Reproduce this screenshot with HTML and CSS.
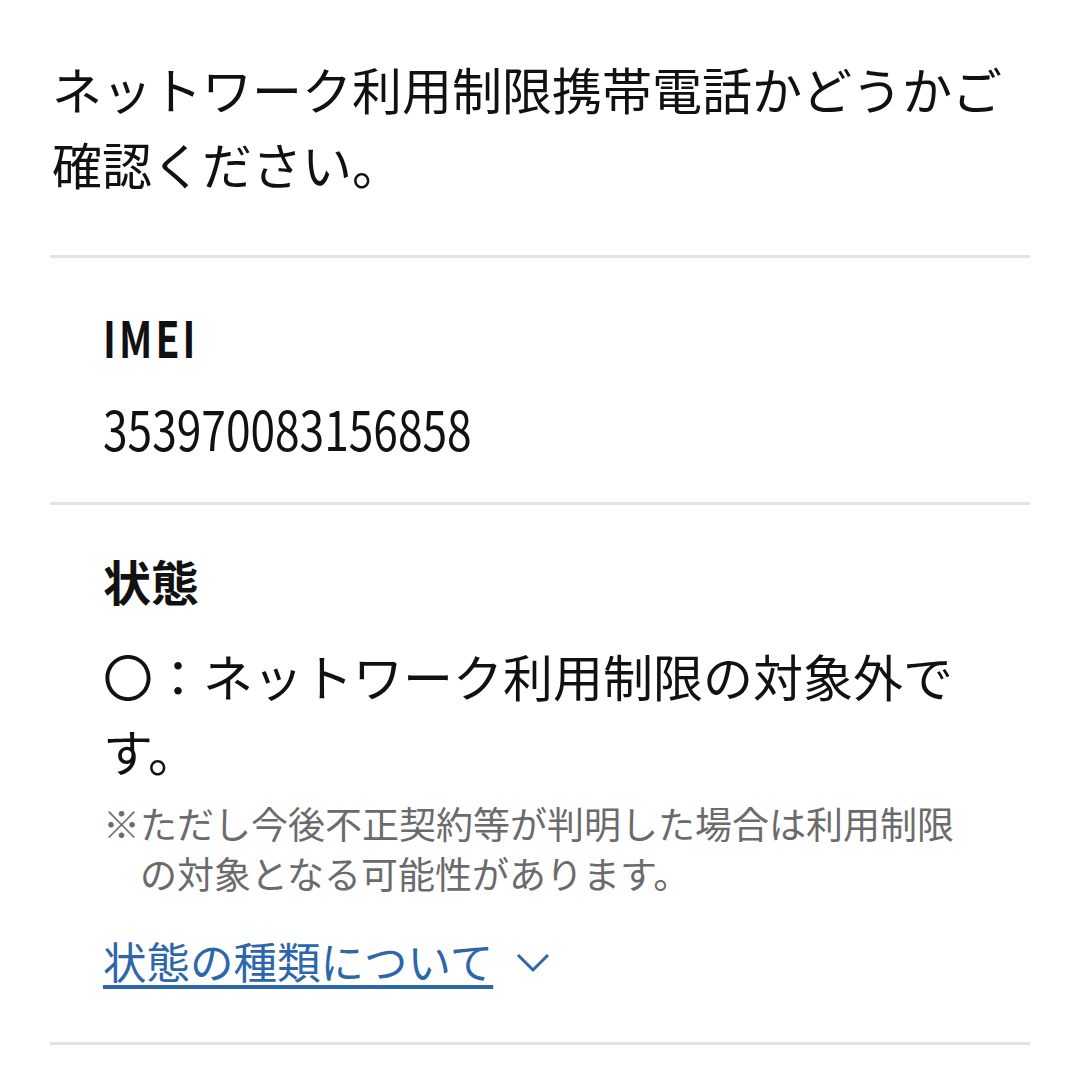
FILE: index.html
```html
<!DOCTYPE html>
<html lang="ja">
<head>
  <meta charset="UTF-8" />
  <title>ネットワーク利用制限携帯電話の確認</title>
  <link rel="stylesheet" href="styles.css">
</head>

<body>

  <div class="page">
    <p class="lead">ネットワーク利用制限携帯電話かどうかご確認ください。</p>

    <div class="section">
      <div class="label narrow">IMEI</div>
      <div class="imei"><span class="narrow">353970083156858</span></div>
    </div>

    <div class="section">
      <div class="label">状態</div>
      <p class="status">〇：ネットワーク利用制限の対象外です。</p>
      <p class="note">※ただし今後不正契約等が判明した場合は利用制限の対象となる可能性があります。</p>
      <div class="more">
        <a href="#" class="more-link">状態の種類について</a>
        <svg class="chevron" width="36" height="24" viewBox="0 0 36 24">
          <path d="M3 4 L18 19 L33 4" fill="none" stroke="#2c66ab" stroke-width="3" />
        </svg>
      </div>
    </div>
  </div>

</body>
</html>
```

FILE: styles.css
```css
body {
  margin: 0;
  background: #fff;
  color: #111;
  font-family: "Noto Sans CJK JP", "Noto Sans", sans-serif;
}

.page {
  padding: 0 50px;
}

.lead {
  margin: 0;
  padding: 51px 0 54px 2px;
  font-size: 50px;
  line-height: 75px;
}

.section {
  border-top: 3px solid #e3e3e3;
  padding: 48px 60px 44px 53px;
}

.section + .section {
  padding-top: 45px;
  padding-bottom: 51px;
}

.section:last-child {
  border-bottom: 3px solid #e3e3e3;
}

.label {
  font-size: 48px;
  font-weight: 700;
  line-height: 60px;
}

.narrow {
  display: inline-block;
  transform: scaleX(0.82);
  transform-origin: left center;
}

.label.narrow {
  letter-spacing: 4px;
  font-size: 50px;
  transform: scaleX(0.78);
}

.imei {
  margin-top: 32px;
  font-size: 54px;
  line-height: 60px;
}

.status {
  margin: 28px 0 0;
  font-size: 50px;
  line-height: 75px;
}

.note {
  margin: 10px 0 0;
  padding-left: 1em;
  text-indent: -1em;
  font-size: 37px;
  line-height: 50px;
  color: #6b6b6b;
}

.more {
  margin-top: 33px;
  display: flex;
  align-items: center;
  line-height: 60px;
}

.more-link {
  font-size: 43.5px;
  color: #2c66ab;
  text-decoration: underline;
  text-decoration-thickness: 4px;
  text-underline-offset: 6px;
}

.chevron {
  margin-left: 22px;
  margin-top: 4px;
}
```
